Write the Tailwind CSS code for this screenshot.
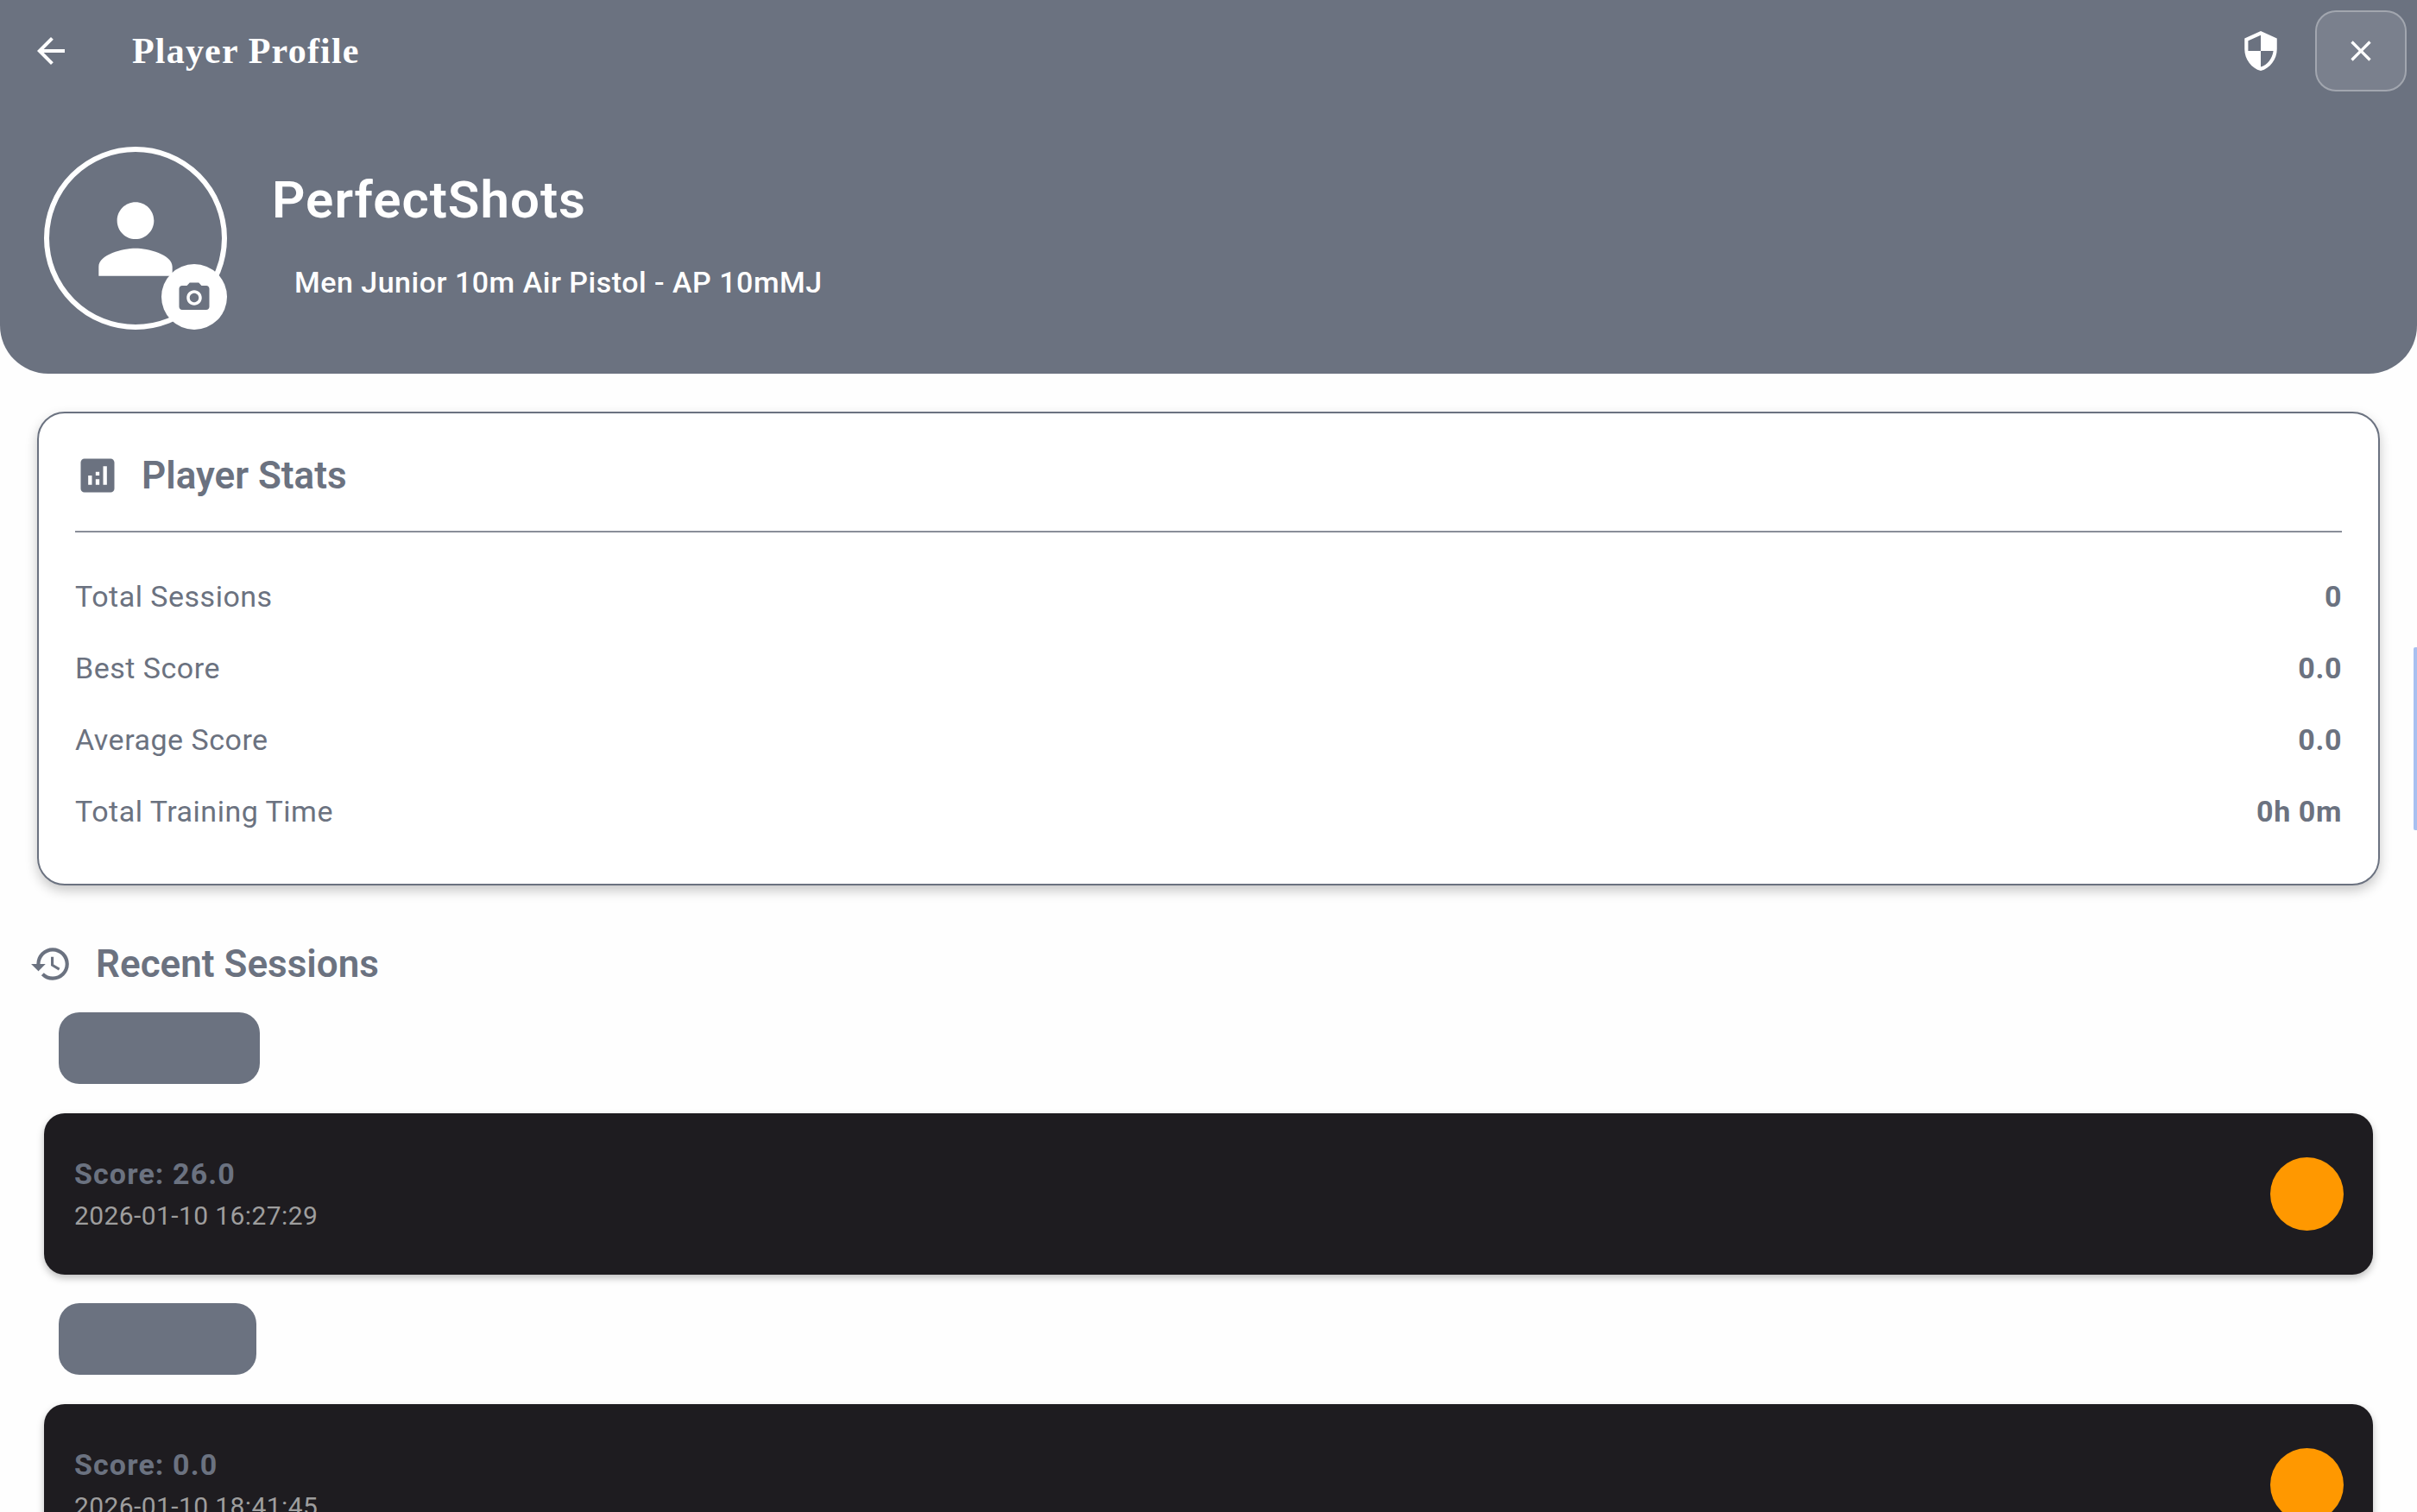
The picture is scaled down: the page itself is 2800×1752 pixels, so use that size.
<!DOCTYPE html>
<html lang="en">
<head>
    <meta charset="UTF-8">
    <meta name="viewport" content="width=device-width, initial-scale=1.0">
    <title>Player Profile</title>
    <script src="https://cdn.jsdelivr.net/npm/@tailwindcss/browser@4"></script>
</head>
<body class="relative bg-[#fefefe] h-[1752px] overflow-hidden font-['Roboto',sans-serif] text-[#6b7280]">

    <!-- Header -->
    <header class="bg-[#6b7280] h-[433px] rounded-b-[56px] text-white">
        <div class="flex items-center h-[118px] pl-[35px] pr-[12px]">
            <svg class="w-[48px] h-[48px] fill-white" viewBox="0 0 24 24"><path d="M20 11H7.83l5.59-5.59L12 4l-8 8 8 8 1.41-1.41L7.83 13H20v-2z"/></svg>
            <h1 class="ml-[70px] text-[42px] tracking-[1.2px] font-bold font-['Liberation_Serif',serif]">Player Profile</h1>
            <svg class="ml-auto w-[50px] h-[50px] fill-white" viewBox="0 0 24 24"><path d="M12 1L3 5v6c0 5.55 3.84 10.74 9 12 5.16-1.26 9-6.45 9-12V5l-9-4zm0 10.99h7c-.53 4.12-3.28 7.79-7 8.94V12H5V6.3l7-3.11v8.8z"/></svg>
            <button class="ml-[38px] w-[106px] h-[94px] flex items-center justify-center rounded-[24px] bg-white/10 border-2 border-white/30">
                <svg class="w-[40px] h-[40px] fill-white" viewBox="0 0 24 24"><path d="M19 6.41L17.59 5 12 10.59 6.41 5 5 6.41 10.59 12 5 17.59 6.41 19 12 13.41 17.59 19 19 17.59 13.41 12 19 6.41z"/></svg>
            </button>
        </div>
        <div class="flex items-start mt-[52px] pl-[51px]">
            <div class="relative w-[212px] h-[212px] rounded-full border-[6px] border-white flex items-center justify-center">
                <svg class="w-[128px] h-[128px] fill-white mt-[1px]" viewBox="0 0 24 24"><path d="M12 12c2.21 0 4-1.79 4-4s-1.79-4-4-4-4 1.79-4 4 1.79 4 4 4zm0 2c-2.67 0-8 1.34-8 4v2h16v-2c0-2.66-5.33-4-8-4z"/></svg>
                <div class="absolute right-[-6px] bottom-[-6px] w-[76px] h-[76px] rounded-full bg-white flex items-center justify-center">
                    <svg class="w-[42px] h-[42px] fill-[#6b7280] mt-[1px]" viewBox="0 0 24 24"><path d="M9 2L7.17 4H4c-1.1 0-2 .9-2 2v12c0 1.1.9 2 2 2h16c1.1 0 2-.9 2-2V6c0-1.1-.9-2-2-2h-3.17L15 2H9zm3 15c-2.76 0-5-2.24-5-5s2.24-5 5-5 5 2.24 5 5-2.24 5-5 5zm0-8c-1.66 0-3 1.34-3 3s1.34 3 3 3 3-1.34 3-3-1.34-3-3-3z"/></svg>
                </div>
            </div>
            <div class="ml-[52px] pt-[27px]">
                <h2 class="text-[60px] leading-[70px] font-semibold tracking-[1px]">PerfectShots</h2>
                <p class="ml-[26px] mt-[40px] text-[34px] leading-[40px] font-medium tracking-[0.5px]">Men Junior 10m Air Pistol - AP 10mMJ</p>
            </div>
        </div>
    </header>

    <!-- Player Stats -->
    <section class="mt-[44px] ml-[43px] w-[2714px] h-[549px] rounded-[32px] border-2 border-[#6b7280] bg-white shadow-[0_6px_14px_rgba(0,0,0,0.22)] px-[42px]">
        <div class="flex items-center h-[138px] pt-[7px] border-b-2 border-[#6b7280]/80">
            <svg class="w-[52px] h-[52px] fill-[#6b7280]" viewBox="0 0 24 24"><path d="M19 3H5c-1.1 0-2 .9-2 2v14c0 1.1.9 2 2 2h14c1.1 0 2-.9 2-2V5c0-1.1-.9-2-2-2zM9 17H7v-5h2v5zm4 0h-2v-3h2v3zm0-5h-2v-2h2v2zm4 5h-2V7h2v10z"/></svg>
            <h3 class="ml-[25px] text-[44px] font-semibold">Player Stats</h3>
        </div>
        <div class="mt-[33px] flex flex-col text-[34px] leading-[83px] tracking-[0.5px]">
            <div class="flex justify-between"><span>Total Sessions</span><span class="font-bold tracking-[0.6px]">0</span></div>
            <div class="flex justify-between"><span>Best Score</span><span class="font-bold tracking-[0.6px]">0.0</span></div>
            <div class="flex justify-between"><span>Average Score</span><span class="font-bold tracking-[0.6px]">0.0</span></div>
            <div class="flex justify-between"><span>Total Training Time</span><span class="font-bold tracking-[0.6px]">0h 0m</span></div>
        </div>
    </section>

    <!-- Recent Sessions -->
    <div class="flex items-center mt-[67px] ml-[34px] h-[48px]">
        <svg class="w-[50px] h-[50px] fill-[#6b7280]" viewBox="0 0 24 24"><path d="M13 3a9 9 0 0 0-9 9H1l3.89 3.89.07.14L9 12H6c0-3.87 3.13-7 7-7s7 3.13 7 7-3.13 7-7 7c-1.93 0-3.68-.79-4.94-2.06l-1.42 1.42A8.954 8.954 0 0 0 13 21a9 9 0 0 0 0-18zm-1 5v5l4.28 2.54.72-1.21-3.5-2.08V8H12z"/></svg>
        <h3 class="ml-[27px] text-[44px] font-semibold">Recent Sessions</h3>
    </div>

    <div class="mt-[32px] ml-[68px] w-[233px] h-[83px] rounded-[24px] bg-[#6b7280]"></div>
    <div class="mt-[34px] ml-[51px] w-[2698px] h-[187px] rounded-[24px] bg-[#1e1c20] shadow-[0_4px_8px_rgba(0,0,0,0.25)] pl-[35px] pr-[34px] flex items-center justify-between">
        <div>
            <p class="text-[34px] leading-[44px] font-bold tracking-[1.1px]">Score: 26.0</p>
            <p class="mt-[7px] text-[30px] leading-[40px] text-[#9e9e9e] tracking-[0.4px]">2026-01-10 16:27:29</p>
        </div>
        <div class="w-[85px] h-[85px] rounded-full bg-[#ff9800]"></div>
    </div>

    <div class="mt-[33px] ml-[68px] w-[229px] h-[83px] rounded-[24px] bg-[#6b7280]"></div>
    <div class="mt-[34px] ml-[51px] w-[2698px] h-[187px] rounded-[24px] bg-[#1e1c20] shadow-[0_4px_8px_rgba(0,0,0,0.25)] pl-[35px] pr-[34px] flex items-center justify-between">
        <div>
            <p class="text-[34px] leading-[44px] font-bold tracking-[1.1px]">Score: 0.0</p>
            <p class="mt-[7px] text-[30px] leading-[40px] text-[#9e9e9e] tracking-[0.4px]">2026-01-10 18:41:45</p>
        </div>
        <div class="w-[85px] h-[85px] rounded-full bg-[#ff9800]"></div>
    </div>

    <!-- Scrollbar thumb -->
    <div class="absolute top-[750px] right-0 w-[4px] h-[212px] rounded-l-[2px] bg-[#a8c0f0]"></div>
</body>
</html>
